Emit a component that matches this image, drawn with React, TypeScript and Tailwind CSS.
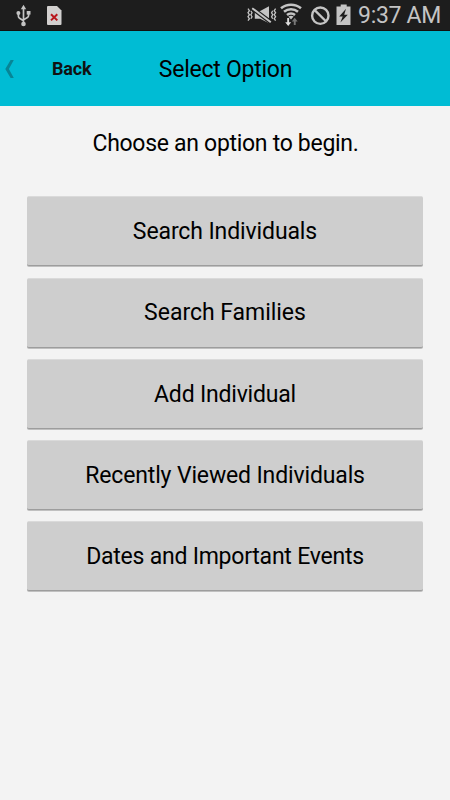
const options = [
  { label: "Search Individuals", tracking: "tracking-[-0.11px]" },
  { label: "Search Families", tracking: "tracking-[-0.03px]" },
  { label: "Add Individual", tracking: "tracking-[-0.2px]" },
  { label: "Recently Viewed Individuals", tracking: "tracking-[-0.14px]" },
  { label: "Dates and Important Events", tracking: "tracking-[-0.23px]" },
];

function UsbIcon() {
  return (
    <svg width="15" height="23" viewBox="0 0 15 23" fill="none" stroke="#c4c4c4" strokeWidth="1.7">
      <path d="M7.5 4v16M2.4 9.5v2.7c0 1.1.4 1.6 1.2 2.1l3.9 2.4M12.6 8.5v3c0 1-.4 1.5-1.2 2l-3.9 2.4" />
      <path d="M7.5 .8 10.2 5.2H4.8Z" fill="#c4c4c4" stroke="none" />
      <circle cx="2.4" cy="8.9" r="2" fill="#c4c4c4" stroke="none" />
      <path d="M10.7 7h3.8v3.6h-3.8Z" fill="#c4c4c4" stroke="none" />
      <circle cx="7.5" cy="20" r="2.3" fill="#c4c4c4" stroke="none" />
    </svg>
  );
}

function NoSimIcon() {
  return (
    <svg width="15" height="19" viewBox="0 0 15 19">
      <path d="M1 0h9l4.5 4.5V18a1 1 0 0 1-1 1H1a1 1 0 0 1-1-1V1a1 1 0 0 1 1-1Z" fill="#d2d0cf" />
      <path d="m4 8.2 6.3 6.2M10.3 8.2 4 14.4" stroke="#b8161b" strokeWidth="2" />
    </svg>
  );
}

function VibrateMuteIcon() {
  return (
    <svg width="30" height="18" viewBox="0 0 30 18" fill="none" stroke="#c4c4c4" strokeWidth="1.3">
      <path d="M1 2.7 2.4 4.7 1 6.7l1.4 2L1 10.7l1.4 2L1 14.7M3.9 4.7 5 6.7 3.9 8.7 5 10.7l-1.1 2" />
      <path d="M28.6 2.7 27.2 4.7l1.4 2-1.4 2 1.4 2-1.4 2 1.4 2M25.7 4.7l-1.1 2 1.1 2-1.1 2 1.1 2" />
      <path d="M7.8 5h5.4L22 .3v17l-8.8-4.6H7.8Z" fill="#c4c4c4" stroke="none" />
      <path d="m5.2 2.2 18.6 14" stroke="#1d1d1d" strokeWidth="4.2" />
      <path d="m5.2 2.2 18.6 14" strokeWidth="2" />
    </svg>
  );
}

function WifiIcon() {
  return (
    <svg width="22" height="23" viewBox="0 0 22 23" fill="none" stroke="#c4c4c4" strokeWidth="2.6">
      <path d="M1 5.3C6.8.5 15.2.5 21 5.3M4 8.7c4.1-3.3 9.9-3.3 14 0M7 12c2.3-1.8 5.7-1.8 8 0" />
      <path d="M8.4 13.6c1.4-1.1 3.8-1.1 5.2 0L11 16.4Z" fill="#c4c4c4" stroke="none" />
      <path d="M7.2 15h1.9v4.2h2.1L8.2 23l-3-3.8h2Z" fill="#dddddd" stroke="none" />
      <path d="M13.8 22h1.9v-3.6h2l-3-3.7-2.9 3.7h2Z" fill="#777777" stroke="none" />
    </svg>
  );
}

function BlockedIcon() {
  return (
    <svg width="20" height="20" viewBox="0 0 20 20" fill="none" stroke="#c4c4c4" strokeWidth="2.4">
      <circle cx="10.3" cy="9.7" r="8.2" />
      <path d="m4.4 3.9 11.8 11.6" />
    </svg>
  );
}

function BatteryIcon() {
  return (
    <svg width="15" height="21" viewBox="0 0 15 21">
      <path d="M4.7 .5h6v2h3.8V21H.5V2.5h4.2Z" fill="#c4c4c4" />
      <path d="M10 4.8 3.2 12.4h3.5l-2.3 6.2 7.4-7.8H8.2Z" fill="#1d1d1d" />
    </svg>
  );
}

function StatusBar() {
  return (
    <div className="flex h-[31px] items-start bg-[#1d1d1d] text-[#c4c4c4] border-b border-[#111111]">
      <div className="flex pl-[16px] pt-[4px]">
        <UsbIcon />
        <div className="pl-[16px] pt-[2px]">
          <NoSimIcon />
        </div>
      </div>
      <div className="ml-auto flex pr-[9px]">
        <div className="pt-[6px]"><VibrateMuteIcon /></div>
        <div className="pl-[3px] pt-[3px]"><WifiIcon /></div>
        <div className="pl-[8px] pt-[6px]"><BlockedIcon /></div>
        <div className="pl-[6px] pt-[4px]"><BatteryIcon /></div>
        <span className="ml-[7px] w-[83px] whitespace-nowrap text-[23px] leading-[31px] tracking-[-0.3px]">9:37 AM</span>
      </div>
    </div>
  );
}

function Header() {
  return (
    <header className="grid h-[75px] grid-cols-[1fr_auto_1fr] items-center bg-[#00bcd4] text-black">
      <button type="button" className="flex items-center pl-[5px]">
        <svg width="9" height="18" viewBox="0 0 9 18">
          <path d="M5.6 0h3.2L3.9 9l4.9 9H5.6L.3 9Z" fill="#078596" />
        </svg>
        <span className="pl-[38px] text-[18px] leading-6 font-bold tracking-[-0.2px] text-[#111111]">Back</span>
      </button>
      <h1 className="pt-[2px] pl-px text-[23px] leading-8 tracking-[-0.25px]">Select Option</h1>
    </header>
  );
}

export default function App() {
  return (
    <div className="h-[800px] w-[450px] overflow-hidden bg-[#f3f3f3] font-['Roboto',sans-serif] text-black">
      <StatusBar />
      <Header />
      <main className="px-[27px] pt-[22px]">
        <p className="pl-px text-center text-[23px] leading-8 tracking-[-0.3px]">Choose an option to begin.</p>
        <div className="mt-[36.35px] flex flex-col gap-[11.25px]">
          {options.map(({ label, tracking }) => (
            <button
              key={label}
              type="button"
              className="h-[70px] w-full rounded-[2px] border-t border-b border-t-[#dadada] border-b-[#9d9d9d] bg-[#cecece] pt-[1.4px] text-[23px] leading-8 shadow-[0_1px_0_#c0c0c0]"
            >
              <span className={tracking}>{label}</span>
            </button>
          ))}
        </div>
      </main>
    </div>
  );
}
